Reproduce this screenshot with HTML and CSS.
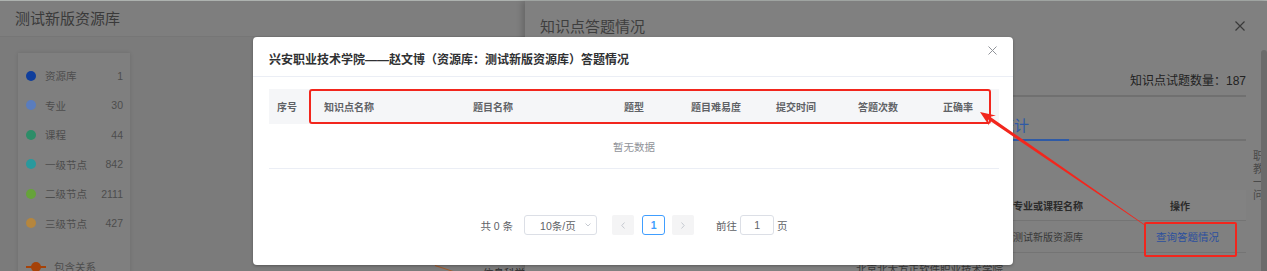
FILE: index.html
```html
<!DOCTYPE html>
<html lang="zh-CN">
<head>
  <meta charset="UTF-8">
  <title>知识点答题情况</title>
  <link rel="stylesheet" href="styles.css">
</head>
<body>

<div class="topline"></div>

<div class="page">
  <div class="graph-pane">
    <div class="pane-header">测试新版资源库</div>
    <div class="graph">
      <ul class="legend">
        <li><span class="dot dot-lib"></span><span>资源库</span><span class="num">1</span></li>
        <li><span class="dot dot-major"></span><span>专业</span><span class="num">30</span></li>
        <li><span class="dot dot-course"></span><span>课程</span><span class="num">44</span></li>
        <li><span class="dot dot-l1"></span><span>一级节点</span><span class="num">842</span></li>
        <li><span class="dot dot-l2"></span><span>二级节点</span><span class="num">2111</span></li>
        <li><span class="dot dot-l3"></span><span>三级节点</span><span class="num">427</span></li>
        <li class="relation">
          <svg class="rel-mark" width="20" height="10" viewBox="0 0 20 10">
            <line x1="0" y1="5" x2="20" y2="5" stroke="#a64208" stroke-width="2"/>
            <circle cx="10" cy="5" r="5" fill="#a64208"/>
          </svg>
          <span>包含关系</span>
        </li>
      </ul>
      <span class="edge"></span>
      <span class="node-label">信息科学</span>
    </div>
  </div>

  <div class="drawer">
    <div class="drawer-header">
      <span>知识点答题情况</span>
      <svg width="10" height="10" viewBox="0 0 10 10">
        <path d="M0.5 0.5 L9.5 9.5 M9.5 0.5 L0.5 9.5" stroke="#3a3a3a" stroke-width="1.2"/>
      </svg>
    </div>
    <div class="drawer-body">
      <div class="drawer-main">
        <div class="count">知识点试题数量：187</div>
        <div class="tabs"><span class="tab">答题统计</span></div>
        <div class="grid">
          <div class="grid-row grid-head">
            <div class="c1">资源库</div>
            <div class="c2">学校名称</div>
            <div class="c3">专业或课程名称</div>
            <div class="c4 op-head">操作</div>
          </div>
          <div class="grid-row">
            <div class="c1">测试新版资源库</div>
            <div class="c2">兴安职业技术学院</div>
            <div class="c3">测试新版资源库</div>
            <div class="c4 op-cell"><span class="link">查询答题情况</span></div>
          </div>
          <div class="grid-row">
            <div class="c1"></div>
            <div class="c2">北京北大方正软件职业技术学院</div>
            <div class="c3"></div>
            <div class="c4"></div>
          </div>
        </div>
      </div>
      <div class="side-col">职<br>教<br>一<br>问</div>
      <div class="scrollbar"></div>
    </div>
  </div>
</div>

<div class="modal">
  <div class="modal-header">
    <div class="modal-title">兴安职业技术学院——赵文博（资源库：测试新版资源库）答题情况</div>
    <svg class="modal-close" width="9" height="9" viewBox="0 0 9 9">
      <path d="M0.5 0.5 L8.5 8.5 M8.5 0.5 L0.5 8.5" stroke="#909399" stroke-width="1"/>
    </svg>
  </div>
  <div class="modal-body">
    <div class="table-head">
      <div class="col-index">序号</div>
      <div class="col-point">知识点名称</div>
      <div class="col-question">题目名称</div>
      <div class="col-type">题型</div>
      <div class="col-level">题目难易度</div>
      <div class="col-time">提交时间</div>
      <div class="col-times">答题次数</div>
      <div class="col-rate">正确率</div>
    </div>
    <div class="table-empty">暂无数据</div>

    <div class="pager">
      <span class="total">共 0 条</span>
      <div class="size-select">
        <span>10条/页</span>
        <svg width="6" height="4" viewBox="0 0 6 4"><path d="M0.5 0.5 L3 3 L5.5 0.5" fill="none" stroke="#c0c4cc" stroke-width="0.9"/></svg>
      </div>
      <span class="btn-prev">
        <svg width="4" height="7" viewBox="0 0 4 7"><path d="M3.5 0.5 L0.8 3.5 L3.5 6.5" fill="none" stroke="#c0c4cc" stroke-width="0.9"/></svg>
      </span>
      <span class="pager-num">1</span>
      <span class="btn-next">
        <svg width="4" height="7" viewBox="0 0 4 7"><path d="M0.5 0.5 L3.2 3.5 L0.5 6.5" fill="none" stroke="#c0c4cc" stroke-width="0.9"/></svg>
      </span>
      <span class="jump-label">前往</span>
      <span class="jump-input">1</span>
      <span>页</span>
    </div>
  </div>
</div>

<svg class="marks" width="1267" height="271" viewBox="0 0 1267 271">
  <rect x="310" y="90" width="680" height="33" rx="2" fill="none" stroke="#f2261d" stroke-width="2"/>
  <rect x="1145" y="223" width="91" height="33" rx="1" fill="none" stroke="#f2261d" stroke-width="2"/>
  <polygon fill="#f2261d" points="980,112 995.8,115.6 990.1,116.8 1144.2,224.3 1143.8,224.7 988.1,119.6 989,125.4"/>
</svg>

</body>
</html>
```

FILE: styles.css
```css
* {
  box-sizing: border-box;
}

body {
  margin: 0;
  width: 1267px;
  height: 271px;
  overflow: hidden;
  position: relative;
  background-color: #7b7b7b;
  font-family: "Liberation Sans", "Noto Sans CJK SC", sans-serif;
  color: #4d4d4d;
}

.topline {
  height: 1px;
  background-color: #adb2af;
}

.page {
  display: flex;
  height: 270px;
}

/* left: graph page */

.graph-pane {
  width: 525px;
  display: flex;
  flex-direction: column;
}

.pane-header {
  height: 36px;
  line-height: 35px;
  padding-left: 15px;
  font-size: 15px;
  color: #3a3a3a;
  background-color: #7e7e7e;
  border-bottom: 1px solid #767676;
}

.graph {
  flex: 1;
  position: relative;
  padding: 16px 0 0 18px;
}

.legend {
  list-style: none;
  margin: 0;
  width: 112px;
  height: 300px;
  padding: 8px 7px 0 8px;
  background-color: #7f7f7f;
  box-shadow: 0 0 4px rgba(0, 0, 0, 0.12);
}

.legend li {
  display: flex;
  align-items: center;
  height: 29.5px;
  font-size: 10.5px;
  color: #4d4d4d;
}

.legend .num {
  margin-left: auto;
}

.dot {
  width: 10px;
  height: 10px;
  border-radius: 50%;
  margin-right: 9px;
}

.dot-lib { background-color: #0f3e9c; }
.dot-major { background-color: #5b7dbd; }
.dot-course { background-color: #2d8d68; }
.dot-l1 { background-color: #29999d; }
.dot-l2 { background-color: #66a33a; }
.dot-l3 { background-color: #b5863e; }

.legend .relation {
  margin-top: 14px;
}

.rel-mark {
  margin-right: 8px;
}

.edge {
  position: absolute;
  left: 435px;
  top: 228px;
  width: 19px;
  height: 1px;
  background-color: #a35a2a;
  transform: rotate(18deg);
  transform-origin: left center;
}

.node-label {
  position: absolute;
  left: 483px;
  top: 228px;
  font-size: 10.5px;
  color: #2a2a2a;
}

/* right: drawer */

.drawer {
  flex: 1;
  display: flex;
  flex-direction: column;
  background-color: #808080;
  box-shadow: -3px 0 6px rgba(0, 0, 0, 0.18);
  position: relative;
}

.drawer-header {
  height: 49px;
  display: flex;
  align-items: center;
  justify-content: space-between;
  padding: 0 22px 0 15px;
  font-size: 15px;
  color: #3e3e3e;
}

.drawer-body {
  flex: 1;
  display: flex;
  min-height: 0;
}

.drawer-main {
  width: 721px;
  padding-left: 15px;
}

.count {
  text-align: right;
  font-size: 12px;
  line-height: 16px;
  padding-top: 23px;
  padding-bottom: 6px;
  border-bottom: 2px solid #707070;
  color: #222;
}

.tabs {
  display: flex;
  margin-top: 16px;
  border-bottom: 2px solid #717171;
}

.tab {
  margin-left: 389px;
  padding: 0 40px;
  font-size: 15px;
  line-height: 26px;
  color: #2e5aa6;
  border-bottom: 2px solid #2e5aa6;
  margin-bottom: -2px;
}

.grid {
  margin-top: 49px;
}

.grid-row {
  display: flex;
  align-items: center;
  height: 32px;
  border-bottom: 1px solid #747474;
  font-size: 10px;
  color: #383838;
  white-space: nowrap;
}

.grid-head {
  height: 31px;
  background-color: #828282;
  font-weight: bold;
  color: #2b2b2b;
}

.c1 { width: 306px; padding-left: 10px; }
.c2 { width: 157px; padding-left: 10px; font-size: 10.5px; }
.c3 { width: 110px; padding-left: 10px; }
.c4 { width: 133px; }

.op-head {
  padding-left: 57px;
}

.op-cell {
  padding-left: 43px;
}

.link {
  font-size: 10.5px;
  color: #2b4f9e;
}

.side-col {
  width: 8px;
  margin-left: 7px;
  overflow: hidden;
  padding-top: 100px;
  font-size: 11px;
  line-height: 13px;
  color: #4a4a4a;
}

.scrollbar {
  width: 6px;
  background-color: #6b6b6b;
  border-radius: 3px 3px 0 0;
}

/* dialog */

.modal {
  position: absolute;
  left: 253px;
  top: 37px;
  width: 760px;
  height: 228px;
  background-color: #fff;
  border-radius: 4px;
  box-shadow: 0 1px 3px rgba(0, 0, 0, 0.3);
}

.modal-header {
  position: relative;
  padding: 16px 16px 9px;
  border-bottom: 1px solid #ebeef5;
}

.modal-title {
  font-size: 12px;
  line-height: 14px;
  font-weight: bold;
  color: #303133;
}

.modal-close {
  position: absolute;
  right: 16px;
  top: 9px;
}

.modal-body {
  padding: 12px 14px 0 16px;
}

.table-head {
  display: flex;
  align-items: center;
  height: 35px;
  background-color: #f5f6f8;
  font-size: 10px;
  font-weight: bold;
  color: #606266;
  white-space: nowrap;
}

.table-head div {
  padding-left: 10px;
}

.table-head .col-index { width: 45px; padding-left: 8px; }
.col-point { width: 149px; }
.col-question { width: 151px; }
.col-type { width: 67px; }
.col-level { width: 85px; }
.col-time { width: 82px; }
.col-times { width: 85px; }
.col-rate { width: 66px; }

.table-empty {
  height: 45px;
  display: flex;
  align-items: center;
  justify-content: center;
  border-bottom: 1px solid #ebeef5;
  font-size: 10.5px;
  color: #909399;
}

.pager {
  display: flex;
  align-items: center;
  justify-content: center;
  height: 20px;
  margin-top: 46px;
  font-size: 10.5px;
  color: #606266;
}

.total {
  margin-right: 11px;
}

.size-select {
  width: 73px;
  height: 20px;
  display: flex;
  align-items: center;
  justify-content: space-between;
  padding: 0 5px 0 15px;
  margin-right: 15px;
  border: 1px solid #dcdfe6;
  border-radius: 3px;
}

.btn-prev, .btn-next {
  width: 22px;
  height: 20px;
  display: flex;
  align-items: center;
  justify-content: center;
  background-color: #f4f4f5;
  border-radius: 2px;
}

.btn-prev {
  margin-right: 8px;
}

.btn-next {
  margin-right: 22px;
}

.pager-num {
  width: 23px;
  height: 20px;
  display: flex;
  align-items: center;
  justify-content: center;
  margin-right: 7px;
  border: 1px solid #409eff;
  border-radius: 3px;
  color: #409eff;
  font-weight: bold;
}

.jump-label {
  margin-right: 3px;
}

.jump-input {
  width: 34px;
  height: 20px;
  display: flex;
  align-items: center;
  justify-content: center;
  margin-right: 3px;
  border: 1px solid #dcdfe6;
  border-radius: 3px;
}

/* annotations */

.marks {
  position: absolute;
  left: 0;
  top: 0;
  pointer-events: none;
}
```
